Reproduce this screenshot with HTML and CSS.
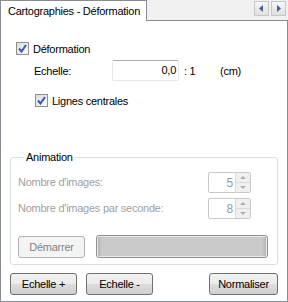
FILE: index.html
```html
<!DOCTYPE html>
<html lang="fr">
<head>
    <meta charset="UTF-8">
    <title>Cartographies - Déformation</title>
    <link rel="stylesheet" href="styles.css">
</head>
<body>
    <div class="window">
        <div class="tab-strip">
            <div class="tab">Cartographies - Déformation</div>
            <div class="tab-filler">
                <div class="scroll-btns">
                    <span class="scroll-btn"><svg width="5" height="7" viewBox="0 0 5 7"><path d="M4 0 L0 3.5 L4 7 Z" fill="#4a5f8f"/></svg></span>
                    <span class="scroll-btn"><svg width="5" height="7" viewBox="0 0 5 7"><path d="M1 0 L5 3.5 L1 7 Z" fill="#4a5f8f"/></svg></span>
                </div>
            </div>
        </div>

        <div class="panel">
            <label class="check-row main-check">
                <span class="checkbox checked"><svg width="9" height="9" viewBox="0 0 9 9"><path d="M1 4.5 L3.5 7.5 L8 1" fill="none" stroke="#3b5aa6" stroke-width="2"/></svg></span>
                <span>Déformation</span>
            </label>

            <div class="scale-row">
                <span class="scale-label">Echelle:</span>
                <span class="text-input">0,0</span>
                <span class="ratio">: 1</span>
                <span class="unit">(cm)</span>
            </div>

            <label class="check-row sub-check">
                <span class="checkbox checked"><svg width="9" height="9" viewBox="0 0 9 9"><path d="M1 4.5 L3.5 7.5 L8 1" fill="none" stroke="#3b5aa6" stroke-width="2"/></svg></span>
                <span>Lignes centrales</span>
            </label>

            <fieldset class="group">
                <legend>Animation</legend>
                <div class="field-row">
                    <span class="disabled-label">Nombre d'images:</span>
                    <span class="spin"><span class="spin-value">5</span><span class="spin-arrows"><i class="up"></i><i class="down"></i></span></span>
                </div>
                <div class="field-row">
                    <span class="disabled-label">Nombre d'images par seconde:</span>
                    <span class="spin"><span class="spin-value">8</span><span class="spin-arrows"><i class="up"></i><i class="down"></i></span></span>
                </div>
                <div class="anim-row">
                    <span class="btn disabled">Démarrer</span>
                    <div class="progress"><div class="progress-fill"></div></div>
                </div>
            </fieldset>

            <div class="bottom-row">
                <span class="btn">Echelle +</span>
                <span class="btn">Echelle -</span>
                <span class="spacer"></span>
                <span class="btn">Normaliser</span>
            </div>
        </div>
    </div>
</body>
</html>
```

FILE: styles.css
```css
* {
    margin: 0;
    padding: 0;
    box-sizing: border-box;
}

body {
    font-family: "Liberation Sans", Arial, sans-serif;
    font-size: 11px;
    letter-spacing: -0.25px;
    color: #000;
    background: #f0f0f0;
    width: 288px;
    height: 302px;
    overflow: hidden;
}

.window {
    display: flex;
    flex-direction: column;
    height: 302px;
}

/* onglets */
.tab-strip {
    display: flex;
    height: 21px;
}

.tab {
    width: 147px;
    background: #fff;
    border: 1px solid #898c95;
    border-bottom: none;
    padding: 4px 0 0 7px;
    white-space: nowrap;
    overflow: hidden;
}

.tab-filler {
    flex: 1;
    border-bottom: 1px solid #898c95;
    display: flex;
    justify-content: flex-end;
    align-items: flex-start;
    padding: 1px 2px 0 0;
}

.scroll-btns {
    display: flex;
    gap: 2px;
}

.scroll-btn {
    width: 15px;
    height: 15px;
    border: 1px solid #c7c7c7;
    background: linear-gradient(#f6f6f6, #e0e0e0);
    display: flex;
    align-items: center;
    justify-content: center;
}

.panel {
    flex: 1;
    background: #fff;
    border: 1px solid #898c95;
    border-top: none;
    padding: 21px 9px 6px 9px;
    display: flex;
    flex-direction: column;
}

/* cases à cocher */
.check-row {
    display: flex;
    align-items: center;
    gap: 4px;
}

.main-check {
    margin-left: 6px;
}

.sub-check {
    margin-left: 25px;
    margin-top: 13px;
}

.checkbox {
    width: 13px;
    height: 13px;
    border: 1px solid #8e8f8f;
    background: linear-gradient(135deg, #dcdcdc, #fbfbfb);
    display: flex;
    align-items: center;
    justify-content: center;
}

.scale-row {
    display: flex;
    align-items: center;
    margin-top: 5px;
    margin-left: 24px;
}

.scale-label {
    width: 78px;
}

.text-input {
    width: 67px;
    height: 21px;
    border: 1px solid #e3e9ef;
    border-top-color: #abadb3;
    border-radius: 2px;
    text-align: right;
    padding: 3px 2px 0 0;
}

.ratio {
    margin-left: 5px;
    width: 36px;
}

/* groupe animation */
.group {
    margin-top: 44px;
    border: 1px solid #d5dfe5;
    border-radius: 3px;
    padding: 6px 26px 6px 7px;
}

.group legend {
    margin-left: 6px;
    padding: 0 2px;
}

.field-row {
    display: flex;
    justify-content: space-between;
    align-items: center;
    height: 26px;
}

.disabled-label {
    color: #a0a0a0;
}

.spin {
    display: flex;
    width: 43px;
    height: 21px;
    border: 1px solid #c9c9c9;
    border-radius: 2px;
    background: #fff;
}

.spin-value {
    flex: 1;
    text-align: right;
    color: #8a9bb8;
    padding: 3px 2px 0 0;
    font-size: 12px;
}

.spin-arrows {
    width: 15px;
    display: flex;
    flex-direction: column;
    background: #f0f0f0;
    border-left: 1px solid #dadada;
}

.spin-arrows i {
    flex: 1;
    display: flex;
    align-items: center;
    justify-content: center;
}

.spin-arrows i::before {
    content: "";
    border-left: 3px solid transparent;
    border-right: 3px solid transparent;
}

.spin-arrows .up::before {
    border-bottom: 3px solid #b0b0b0;
}

.spin-arrows .down {
    border-top: 1px solid #dadada;
}

.spin-arrows .down::before {
    border-top: 3px solid #b0b0b0;
}

.anim-row {
    display: flex;
    align-items: center;
    gap: 11px;
    margin-top: 14px;
    margin-right: -17px;
}

.progress {
    flex: 1;
    height: 23px;
    border: 1px solid #8f8f8f;
    border-radius: 3px;
    padding: 1px;
    background: #eaeaea;
}

.progress-fill {
    height: 100%;
    background: linear-gradient(90deg, #b5b5b5, #cacaca 4px, #cacaca calc(100% - 4px), #b5b5b5);
    border-radius: 1px;
}

/* boutons */
.btn {
    display: flex;
    align-items: center;
    justify-content: center;
    height: 22px;
    width: 67px;
    border: 1px solid #707070;
    border-radius: 3px;
    background: linear-gradient(#f2f2f2 0%, #ebebeb 50%, #dddddd 50%, #cfcfcf 100%);
}

.btn.disabled {
    color: #838383;
    border-color: #adb2b5;
    background: #f4f4f4;
}

.bottom-row {
    display: flex;
    gap: 9px;
    margin-top: auto;
}

.spacer {
    flex: 1;
}

.bottom-row .btn:last-child {
    width: 69px;
}
```
